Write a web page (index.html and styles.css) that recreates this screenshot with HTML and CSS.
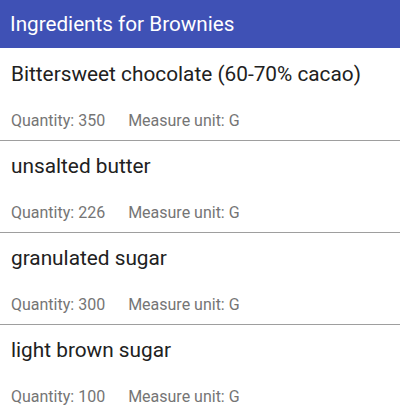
FILE: index.html
```html
<!DOCTYPE html>
<html>
<head>
<meta charset="utf-8">
<link rel="stylesheet" href="styles.css">
</head>
<body>
<header class="appbar">Ingredients for Brownies</header>
<ul class="list">
  <li class="item">
    <div class="name">Bittersweet chocolate (60-70% cacao)</div>
    <div class="meta"><span class="qty">Quantity: 350</span><span>Measure unit: G</span></div>
  </li>
  <li class="item">
    <div class="name">unsalted butter</div>
    <div class="meta"><span class="qty">Quantity: 226</span><span>Measure unit: G</span></div>
  </li>
  <li class="item">
    <div class="name">granulated sugar</div>
    <div class="meta"><span class="qty">Quantity: 300</span><span>Measure unit: G</span></div>
  </li>
  <li class="item">
    <div class="name">light brown sugar</div>
    <div class="meta"><span class="qty">Quantity: 100</span><span>Measure unit: G</span></div>
  </li>
</ul>
</body>
</html>
```
FILE: styles.css
```css
html, body {
  margin: 0;
  padding: 0;
  background: #ffffff;
  font-family: Roboto, "Noto Sans", sans-serif;
}
.appbar {
  height: 48px;
  background: #3f51b5;
  color: #ffffff;
  font-size: 20.7px;
  line-height: 48px;
  padding-left: 10px;
  box-sizing: border-box;
}
.list {
  list-style: none;
  margin: 0;
  padding: 1px 0 0;
}
.item {
  height: 92px;
  box-sizing: border-box;
  padding: 13px 11px 0;
  border-bottom: 1px solid #9e9e9e;
}
.item:last-child {
  border-bottom: none;
}
.name {
  font-size: 20.8px;
  line-height: 24px;
  color: #212121;
}
.meta {
  margin-top: 25px;
  font-size: 16px;
  line-height: 20px;
  color: #757575;
  display: flex;
  gap: 23px;
}
```
